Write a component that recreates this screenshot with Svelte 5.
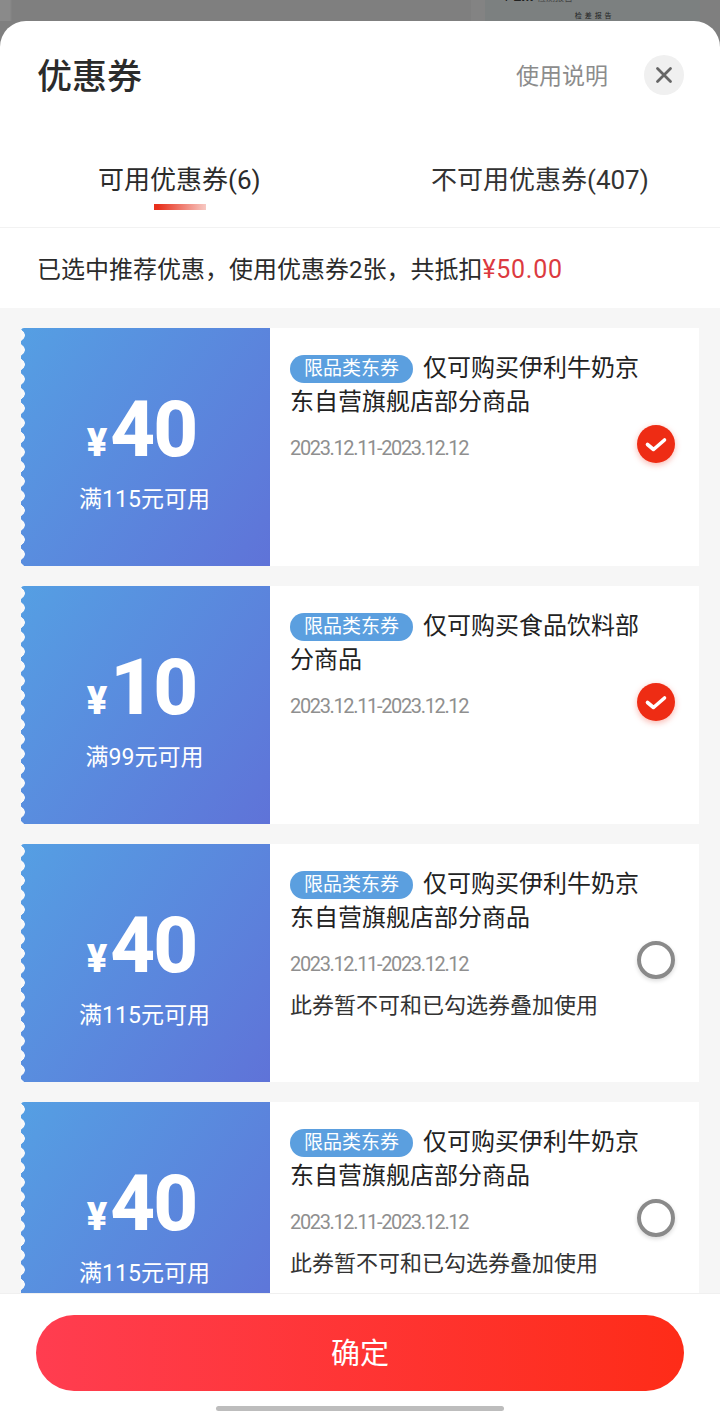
<script>
  const coupons = [
    { yen: '40', min: '满115元可用', title: '仅可购买伊利牛奶京东自营旗舰店部分商品', checked: true, note: '' },
    { yen: '10', min: '满99元可用', title: '仅可购买食品饮料部分商品', checked: true, note: '' },
    { yen: '40', min: '满115元可用', title: '仅可购买伊利牛奶京东自营旗舰店部分商品', checked: false, note: '此券暂不可和已勾选券叠加使用' },
    { yen: '40', min: '满115元可用', title: '仅可购买伊利牛奶京东自营旗舰店部分商品', checked: false, note: '此券暂不可和已勾选券叠加使用' }
  ];
</script>

<div class="page">
  <div class="backdrop">
    <div class="behind">
      <span class="behind-big">1 <b>EM</b> <small>检测报告</small></span>
      <span class="behind-small">检 差 报 告</span>
    </div>
  </div>

  <div class="sheet">
    <header>
      <h1>优惠券</h1>
      <div class="header-right">
        <span class="help">使用说明</span>
        <button class="close" aria-label="关闭">
          <svg width="20" height="20" viewBox="0 0 20 20">
            <path d="M3.5 3.5 16.5 16.5M16.5 3.5 3.5 16.5" fill="none" stroke="#666" stroke-width="2.8" stroke-linecap="round" />
          </svg>
        </button>
      </div>
    </header>

    <nav class="tabs">
      <div class="tab active">可用优惠券(6)<i></i></div>
      <div class="tab other">不可用优惠券(407)</div>
    </nav>

    <div class="notice">已选中推荐优惠，使用优惠券2张，共抵扣<span>¥50.00</span></div>

    <div class="list">
      {#each coupons as c}
        <div class="coupon">
          <div class="left">
            <div class="amount"><span class="yen">¥</span>{c.yen}</div>
            <div class="min">{c.min}</div>
          </div>
          <div class="right">
            <div class="title"><span class="tag">限品类东券</span>{c.title}</div>
            <div class="date-row">
              <span class="date">2023.12.11-2023.12.12</span>
              {#if c.checked}
                <svg class="check" width="38" height="38" viewBox="0 0 38 38">
                  <circle cx="19" cy="19" r="19" fill="#ee2c14" />
                  <path d="M10.5 19.5 16.5 24.5 27.5 15" fill="none" stroke="#fff" stroke-width="3.6" stroke-linecap="round" stroke-linejoin="round" />
                </svg>
              {:else}
                <span class="radio"></span>
              {/if}
            </div>
            {#if c.note}
              <div class="note">{c.note}</div>
            {/if}
          </div>
        </div>
      {/each}
    </div>

    <footer>
      <button class="ok">确定</button>
      <div class="home"></div>
    </footer>
  </div>
</div>

<style>
  :global(body) {
    margin: 0;
  }

  .page {
    width: 720px;
    height: 1412px;
    display: flex;
    flex-direction: column;
    overflow: hidden;
    background: #7f7f7f;
    font-family: Roboto, "Noto Sans CJK SC", sans-serif;
    color: #2b2b2b;
  }

  .backdrop {
    height: 21px;
    flex: none;
    display: flex;
    justify-content: flex-end;
    padding: 0 20px 0 12px;
    background: linear-gradient(90deg, #8a8a8a 0, #8a8a8a 10px, #7f7f7f 12px);
    overflow: hidden;
  }

  .behind {
    width: 215px;
    height: 21px;
    background: #7c8080;
    box-shadow: -14px 0 0 #838383;
    display: flex;
    flex-direction: column;
    align-items: center;
    overflow: hidden;
  }

  .behind-big {
    font-size: 14px;
    line-height: 14px;
    margin: -11px 0 0 -110px;
    color: #222;
    white-space: nowrap;
  }

  .behind-big small {
    font-size: 9px;
    color: #444;
  }

  .behind-small {
    font-size: 7px;
    line-height: 10px;
    margin: 6px 0 0 2px;
    color: #222;
    white-space: nowrap;
    letter-spacing: 0.6px;
  }

  .sheet {
    flex: 1;
    min-height: 0;
    display: flex;
    flex-direction: column;
    background: #fff;
    border-radius: 26px 26px 0 0;
    overflow: hidden;
  }

  header {
    flex: none;
    height: 110px;
    display: flex;
    justify-content: space-between;
    padding: 34px 36px 0 37px;
    box-sizing: border-box;
  }

  h1 {
    margin: 2px 0 0;
    font-size: 35px;
    line-height: 42px;
    font-weight: 500;
  }

  .header-right {
    display: flex;
    align-items: flex-start;
    gap: 36px;
  }

  .help {
    font-size: 23px;
    line-height: 44px;
    color: #8c8c8c;
  }

  .close {
    width: 40px;
    height: 40px;
    padding: 0;
    border: 0;
    border-radius: 50%;
    background: #f0f0f0;
    display: flex;
    align-items: center;
    justify-content: center;
  }

  .tabs {
    flex: none;
    height: 97px;
    box-sizing: border-box;
    display: flex;
    border-bottom: 1px solid #f2f2f2;
  }

  .tab {
    font-size: 26px;
    line-height: 36px;
    padding-top: 31px;
    white-space: nowrap;
  }

  .tab.active {
    margin-left: 98px;
    width: 163px;
    display: flex;
    flex-direction: column;
  }

  .tab.active i {
    display: block;
    width: 52px;
    height: 6px;
    margin: 6px 0 0 56px;
    background: linear-gradient(90deg, #e8301c 0, #e8301c 4px, #f7c9c3 100%);
  }

  .tab.other {
    margin-left: 170px;
    color: #333;
  }

  .notice {
    flex: none;
    height: 80px;
    padding-left: 37px;
    font-size: 24px;
    line-height: 84px;
    white-space: nowrap;
  }

  .notice span {
    color: #dc3a40;
    font-size: 25px;
    letter-spacing: 0.7px;
  }

  .list {
    flex: 1;
    min-height: 0;
    overflow: hidden;
    background: #f6f6f6;
    padding: 20px 21px 0;
    display: flex;
    flex-direction: column;
    gap: 20px;
  }

  .coupon {
    flex: none;
    height: 238px;
    display: flex;
    background: #fff;
  }

  .left {
    flex: none;
    width: 249px;
    box-sizing: border-box;
    padding-top: 58px;
    position: relative;
    display: flex;
    flex-direction: column;
    align-items: center;
    color: #fff;
    background: linear-gradient(125deg, #559fe3, #5f73d8);
    border-radius: 3px 0 0 3px;
  }

  /* scalloped left edge */
  .left::before {
    content: "";
    position: absolute;
    left: 0;
    top: 0;
    bottom: 0;
    width: 5px;
    background: radial-gradient(circle at -2px 50%, #f9f9f9 5.5px, transparent 6px) 0 0 / 5px 14.6px repeat-y;
  }

  .amount {
    font-size: 78px;
    line-height: 88px;
    font-weight: 800;
    letter-spacing: -2px;
    white-space: nowrap;
    padding-right: 8px;
  }

  .yen {
    font-size: 38px;
    font-weight: 900;
    letter-spacing: 0;
    margin-right: 3px;
  }

  .min {
    margin-top: -3px;
    padding-right: 2px;
    font-size: 23px;
    line-height: 32px;
    white-space: nowrap;
  }

  .right {
    flex: 1;
    min-width: 0;
    padding: 23px 24px 0 20px;
  }

  .title {
    width: 360px;
    font-size: 24px;
    line-height: 34px;
    color: #222;
  }

  .tag {
    display: inline-block;
    height: 28px;
    padding: 0 14px;
    margin-right: 10px;
    border-radius: 14px;
    background: #5b9fdf;
    color: #fff;
    font-size: 19px;
    line-height: 28px;
    vertical-align: 1px;
  }

  .date-row {
    display: flex;
    justify-content: space-between;
    align-items: flex-start;
    height: 30px;
    margin-top: 5px;
  }

  .date {
    padding-top: 10px;
    font-size: 20px;
    line-height: 28px;
    color: #8f8f8f;
    white-space: nowrap;
    letter-spacing: -1.35px;
  }

  .check {
    flex: none;
    margin-top: 1px;
    filter: drop-shadow(0 2px 3px rgba(238, 44, 20, 0.35));
  }

  .radio {
    flex: none;
    width: 38px;
    height: 38px;
    margin-top: 1px;
    box-sizing: border-box;
    border: 4px solid #8a8a8a;
    border-radius: 50%;
    box-shadow: 0 2px 4px rgba(0, 0, 0, 0.15);
  }

  .note {
    margin-top: 21px;
    font-size: 22px;
    line-height: 30px;
    color: #333;
    white-space: nowrap;
  }

  footer {
    flex: none;
    height: 119px;
    box-sizing: border-box;
    padding: 21px 36px 0;
    background: #fff;
    border-top: 1px solid #f0f0f0;
    display: flex;
    flex-direction: column;
    align-items: center;
  }

  .ok {
    width: 648px;
    height: 76px;
    flex: none;
    border: 0;
    border-radius: 38px;
    background: linear-gradient(90deg, #ff3d50, #fe2c18);
    color: #fff;
    font: 400 29px/76px Roboto, "Noto Sans CJK SC", sans-serif;
  }

  .home {
    width: 288px;
    height: 5px;
    margin-top: 15px;
    border-radius: 3px;
    background: #bdbdbd;
  }
</style>
